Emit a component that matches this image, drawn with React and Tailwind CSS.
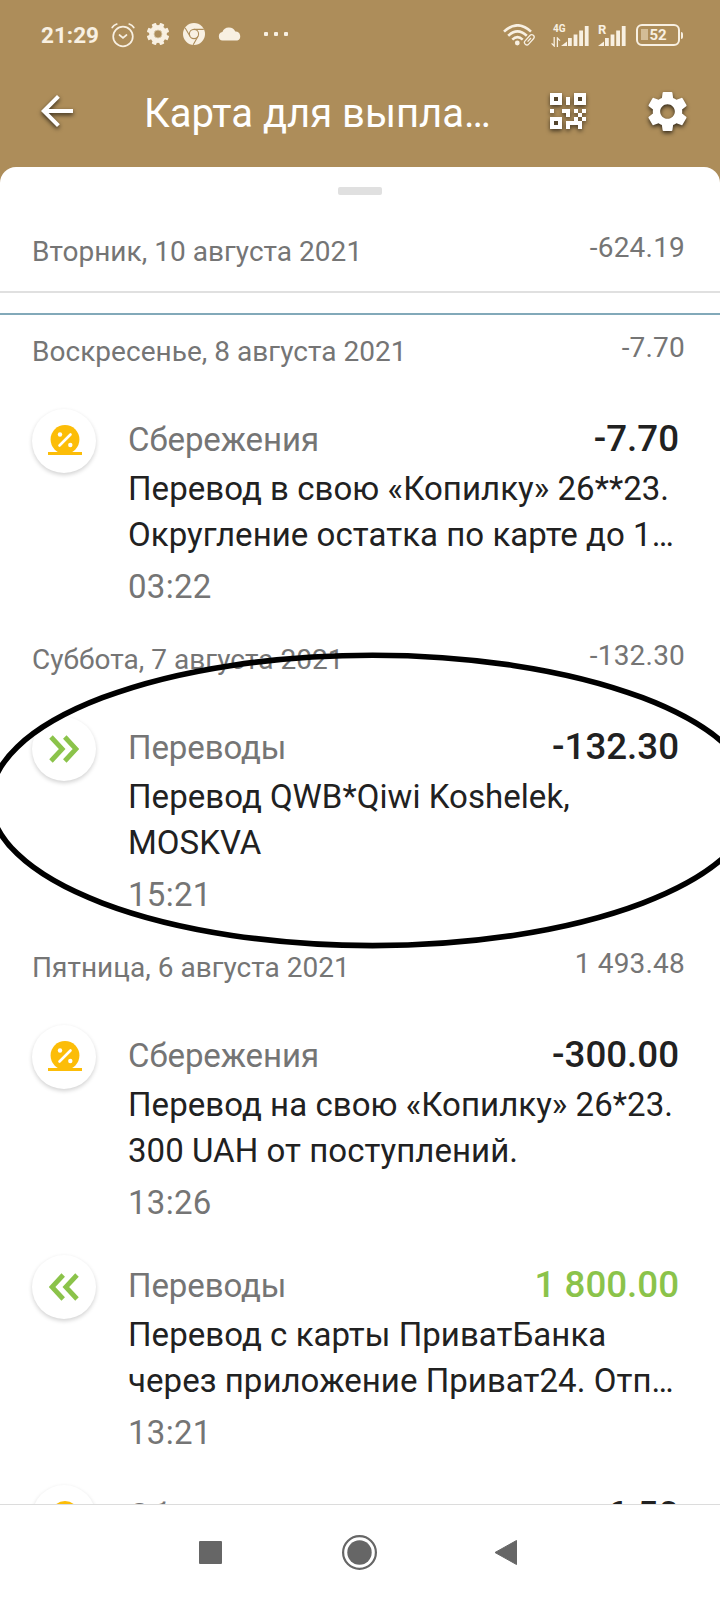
import React from 'react';
import { MdArrowBack, MdSettings } from 'react-icons/md';

const days = [
  {
    id: 'aug-8',
    date: 'Воскресенье, 8 августа 2021',
    total: '-7.70',
    items: [
      {
        id: 'saving-0322',
        kind: 'saving',
        title: 'Сбережения',
        amount: '-7.70',
        lines: ['Перевод в свою «Копилку» 26**23.', 'Округление остатка по карте до 1…'],
        time: '03:22',
      },
    ],
  },
  {
    id: 'aug-7',
    date: 'Суббота, 7 августа 2021',
    total: '-132.30',
    items: [
      {
        id: 'out-1521',
        kind: 'out',
        title: 'Переводы',
        amount: '-132.30',
        lines: ['Перевод QWB*Qiwi Koshelek,', 'MOSKVA'],
        time: '15:21',
        circled: true,
      },
    ],
  },
  {
    id: 'aug-6',
    date: 'Пятница, 6 августа 2021',
    total: '1 493.48',
    items: [
      {
        id: 'saving-1326',
        kind: 'saving',
        title: 'Сбережения',
        amount: '-300.00',
        lines: ['Перевод на свою «Копилку» 26*23.', '300 UAH от поступлений.'],
        time: '13:26',
      },
      {
        id: 'in-1321',
        kind: 'in',
        title: 'Переводы',
        amount: '1 800.00',
        lines: ['Перевод с карты ПриватБанка', 'через приложение Приват24. Отп…'],
        time: '13:21',
      },
      {
        id: 'saving-last',
        kind: 'saving',
        title: 'Сбережения',
        amount: '-6.50',
        lines: [],
        time: '',
      },
    ],
  },
];

const qrRows = [
  '###...###',
  '#.#.#.#.#',
  '###.#.###',
  '.........',
  '#..##.#.#',
  '....#..#.',
  '###...#.#',
  '#.#.####.',
  '###.#..#.',
];

const SignalBars = () => (
  <svg width="28" height="21" viewBox="0 0 28 21" fill="currentColor">
    <path d="M0 20 L6 15.5 V20 Z" />
    <rect x="7" y="12" width="3.8" height="8" />
    <rect x="12.6" y="8.5" width="3.8" height="11.5" />
    <rect x="18.2" y="4.5" width="3.8" height="15.5" />
    <rect x="23.8" y="0" width="3.8" height="20" />
  </svg>
);

const StatusBar = () => (
  <div className="flex h-[70px] justify-between pl-[41px] pr-[37px] text-[#f8f0e2]">
    <div className="flex h-[70px] items-center">
      <span className="w-[58px] text-[22.5px] font-bold leading-[70px]">21:29</span>
      <svg className="ml-[12px]" width="24" height="26" viewBox="0 0 24 26" fill="none" stroke="currentColor" strokeWidth="1.7" strokeLinecap="round">
        <circle cx="12" cy="14.5" r="9.8" />
        <path d="M1.2 5.5 Q2.8 3 5.8 2 M22.8 5.5 Q21.2 3 18.2 2" />
        <path d="M8.5 13 L12 15.8 L15.5 13" />
      </svg>
      <svg className="ml-[12px] -mt-[2px]" width="22" height="22" viewBox="0 0 22 22">
        <g fill="currentColor">
          <circle cx="11" cy="11" r="8.9" />
          {[0, 45, 90, 135, 180, 225, 270, 315].map((angle) => (
            <rect key={angle} x="8.7" y="-0.2" width="4.6" height="5" rx="0.8" transform={`rotate(${angle + 22.5} 11 11)`} />
          ))}
        </g>
        <circle cx="11" cy="11" r="4" fill="#ad8d5a" stroke="#dccbab" strokeWidth="0.8" />
      </svg>
      <svg className="ml-[14px] -mt-[2px]" width="22" height="22" viewBox="0 0 22 22">
        <circle cx="11" cy="11" r="11" fill="currentColor" />
        <g fill="none" stroke="#ad8d5a" strokeWidth="1.1">
          <circle cx="11" cy="11" r="4.6" />
          <path d="M11 6.4 H20.8 M7 13.3 L2.2 5 M15 13.3 L10.2 21.8" />
        </g>
      </svg>
      <svg className="ml-[13px] -mt-[3px]" width="24" height="14" viewBox="0 0 24 14" fill="currentColor">
        <path d="M4.6 13.6 A4.3 4.3 0 0 1 4.4 5.1 A7 7 0 0 1 17.3 4.6 A4.7 4.7 0 0 1 19.4 13.6 Z" />
      </svg>
      <div className="ml-[22px] -mt-[2px] flex gap-[6px]">
        <span className="size-[4px] rounded-[1px] bg-current" />
        <span className="size-[4px] rounded-[1px] bg-current" />
        <span className="size-[4px] rounded-[1px] bg-current" />
      </div>
    </div>

    <div className="flex h-[70px] items-center">
      <svg width="32" height="22" viewBox="0 0 32 22" fill="none" stroke="currentColor" strokeWidth="2.6">
        <path d="M1 7.6 Q14.5 -5 28 7.6" />
        <path d="M5.2 11.8 Q14.5 3 23.8 11.8" />
        <path d="M9.3 15.6 Q14.5 10.8 19.7 15.6" />
        <circle cx="14.3" cy="19" r="2.4" fill="currentColor" stroke="none" />
        <g strokeWidth="1.3" transform="rotate(-48 26.3 15.8)">
          <rect x="20.3" y="13.4" width="12" height="4.8" rx="2.4" fill="#ad8d5a" />
          <path d="M23.8 15.8 H28.8" />
        </g>
      </svg>
      <div className="ml-[16px] flex h-[23px] items-end">
        <div className="flex w-[10px] flex-col">
          <span className="pl-[2px] text-[10px] font-bold leading-[10px]">4G</span>
          <svg className="mt-[3px]" width="10" height="10" viewBox="0 0 10 10" fill="none" stroke="currentColor" strokeWidth="1.3">
            <path d="M3.2 0 V9 L0.6 6.4 M6.4 10 V1 L9 3.6" />
          </svg>
        </div>
        <SignalBars />
      </div>
      <div className="relative ml-[9px] flex h-[23px] items-end">
        <span className="absolute left-0 top-[1px] text-[13px] font-bold leading-[10px]">R</span>
        <SignalBars />
      </div>
      <div className="ml-[10px] flex items-center">
        <div className="relative flex h-[22px] w-[44px] items-center justify-center rounded-[6px] border-[2.5px] border-current">
          <span className="absolute left-[3px] top-[3px] h-[11px] w-[7px] bg-[#d3bd97]" />
          <span className="relative text-[15px] font-bold leading-[18px]">52</span>
        </div>
        <span className="ml-px h-[7px] w-[2px] rounded-r-sm bg-current" />
      </div>
    </div>
  </div>
);

const QrIcon = () => (
  <svg className="drop-shadow-[0_2px_2px_rgba(0,0,0,0.6)]" width="36" height="36" viewBox="0 0 9 9" fill="#fff" shapeRendering="crispEdges">
    {[[1, 1], [7, 1], [1, 7]].map(([x, y]) => (
      <rect key={`eye-${x}-${y}`} x={x} y={y} width="1" height="1" fill="#54452c" />
    ))}
    {qrRows.map((row, y) =>
      row.split('').map((cell, x) => (cell === '#' ? <rect key={`${x}-${y}`} x={x} y={y} width="1" height="1" /> : null))
    )}
  </svg>
);

const TopBar = () => (
  <header className="flex h-[97px] items-start pl-[33px] pr-[28px] text-white">
    <MdArrowBack className="mt-[17px] size-[48px] drop-shadow-[0_2px_2px_rgba(0,0,0,0.7)]" />
    <h1 className="ml-[63px] mt-[20px] w-[406px] whitespace-nowrap text-[40px] leading-[48px]">Карта для выпла…</h1>
    <div className="mt-[23px]">
      <QrIcon />
    </div>
    <MdSettings className="ml-auto mt-[17px] size-[49px] drop-shadow-[0_2px_2px_rgba(0,0,0,0.7)]" />
  </header>
);

const TransactionIcon = ({ kind }) => (
  <div className="flex size-16 shrink-0 items-center justify-center rounded-full bg-white shadow-[0_2px_4px_rgba(0,0,0,0.18)]">
    {kind === 'saving' && (
      <svg className="ml-px -mt-[2px]" width="34" height="30" viewBox="0 0 34 30">
        <circle cx="17" cy="14.5" r="14.4" fill="#fcbd08" />
        <rect x="0" y="27" width="34" height="3" fill="#fcbd08" />
        <path d="M11.5 20.5 L22.5 9.5" stroke="#fff" strokeWidth="2.6" strokeLinecap="round" />
        <circle cx="12" cy="9.5" r="2.2" fill="#fff" />
        <circle cx="22.3" cy="20" r="2.2" fill="#fff" />
      </svg>
    )}
    {kind !== 'saving' && (
      <svg
        className={kind === 'in' ? 'rotate-180' : ''}
        width="30"
        height="28"
        viewBox="0 0 30 28"
        fill="none"
        stroke="#8bc34a"
        strokeWidth="4.8"
      >
        <path d="M2 2 L13.2 14 L2 26 M15.8 2 L27 14 L15.8 26" />
      </svg>
    )}
  </div>
);

const DayHeader = ({ date, total }) => (
  <div className="flex h-[78px] justify-between pl-8 pr-[35px] text-[28px] leading-[40px] text-[#757575]">
    <span className="mt-px tracking-[0.03px]">{date}</span>
    <span className="-mt-[3px] tracking-[0.2px]">{total}</span>
  </div>
);

const Transaction = ({ item }) => (
  <div className="relative flex h-[230px] pl-8 pr-[41px]">
    <TransactionIcon kind={item.kind} />
    <div className="ml-8 mt-2 min-w-0 flex-1 text-[33px] leading-[46px] tracking-[0.05px] text-[#212121]">
      <div className="flex h-[49px] justify-between">
        <span className="tracking-[-0.1px] text-[#757575]">{item.title}</span>
        <span
          className={
            item.kind === 'in'
              ? 'text-[36.7px] font-medium leading-[44px] tracking-normal text-[#8bc34a]'
              : 'text-[36.7px] font-medium leading-[44px] tracking-normal'
          }
        >
          {item.amount}
        </span>
      </div>
      {item.lines.map((line) => (
        <p key={line} className="whitespace-nowrap">{line}</p>
      ))}
      <p className="mt-[6px] tracking-[0.3px] text-[#757575]">{item.time}</p>
    </div>
    {/* Hand-drawn mark around the payment */}
    {item.circled && (
      <svg className="pointer-events-none absolute left-0 -top-[67px]" width="720" height="300" viewBox="0 0 720 300" fill="none">
        <ellipse cx="372.5" cy="150.4" rx="382" ry="145.2" stroke="#000" strokeWidth="5.6" />
      </svg>
    )}
  </div>
);

const NavBar = () => (
  <nav className="h-24 border-t border-[#dcdcdc] bg-white text-[#666]">
    <svg width="720" height="95" viewBox="0 0 720 95" fill="currentColor">
      <rect x="199" y="36" width="23" height="23" rx="1" />
      <circle cx="359.5" cy="47.5" r="16.4" fill="none" stroke="currentColor" strokeWidth="2.2" />
      <circle cx="359.5" cy="47.5" r="12.2" />
      <path d="M495 47.5 L516.5 35.5 V59.5 Z" stroke="currentColor" strokeWidth="1" strokeLinejoin="round" />
    </svg>
  </nav>
);

export default function App() {
  return (
    <div className="flex h-[1600px] w-[720px] flex-col overflow-hidden bg-[#ad8d5a] font-['Roboto',sans-serif]">
      <StatusBar />
      <TopBar />
      <main className="flex min-h-0 flex-1 flex-col overflow-hidden rounded-t-[16px] bg-white">
        <div className="mx-auto mt-5 h-2 w-11 shrink-0 rounded-[2px] bg-[#e0e0e0]" />
        <div className="mt-[36px] h-[60px] shrink-0">
          <DayHeader date="Вторник, 10 августа 2021" total="-624.19" />
        </div>
        <div className="h-[2px] shrink-0 bg-[#e0e0e0]" />
        <div className="mt-5 h-[2px] shrink-0 bg-[#82a9b9]" />
        <div className="mt-[16px]">
          {days.map((day) => (
            <section key={day.id}>
              <DayHeader date={day.date} total={day.total} />
              {day.items.map((item) => (
                <Transaction key={item.id} item={item} />
              ))}
            </section>
          ))}
        </div>
      </main>
      <NavBar />
    </div>
  );
}
